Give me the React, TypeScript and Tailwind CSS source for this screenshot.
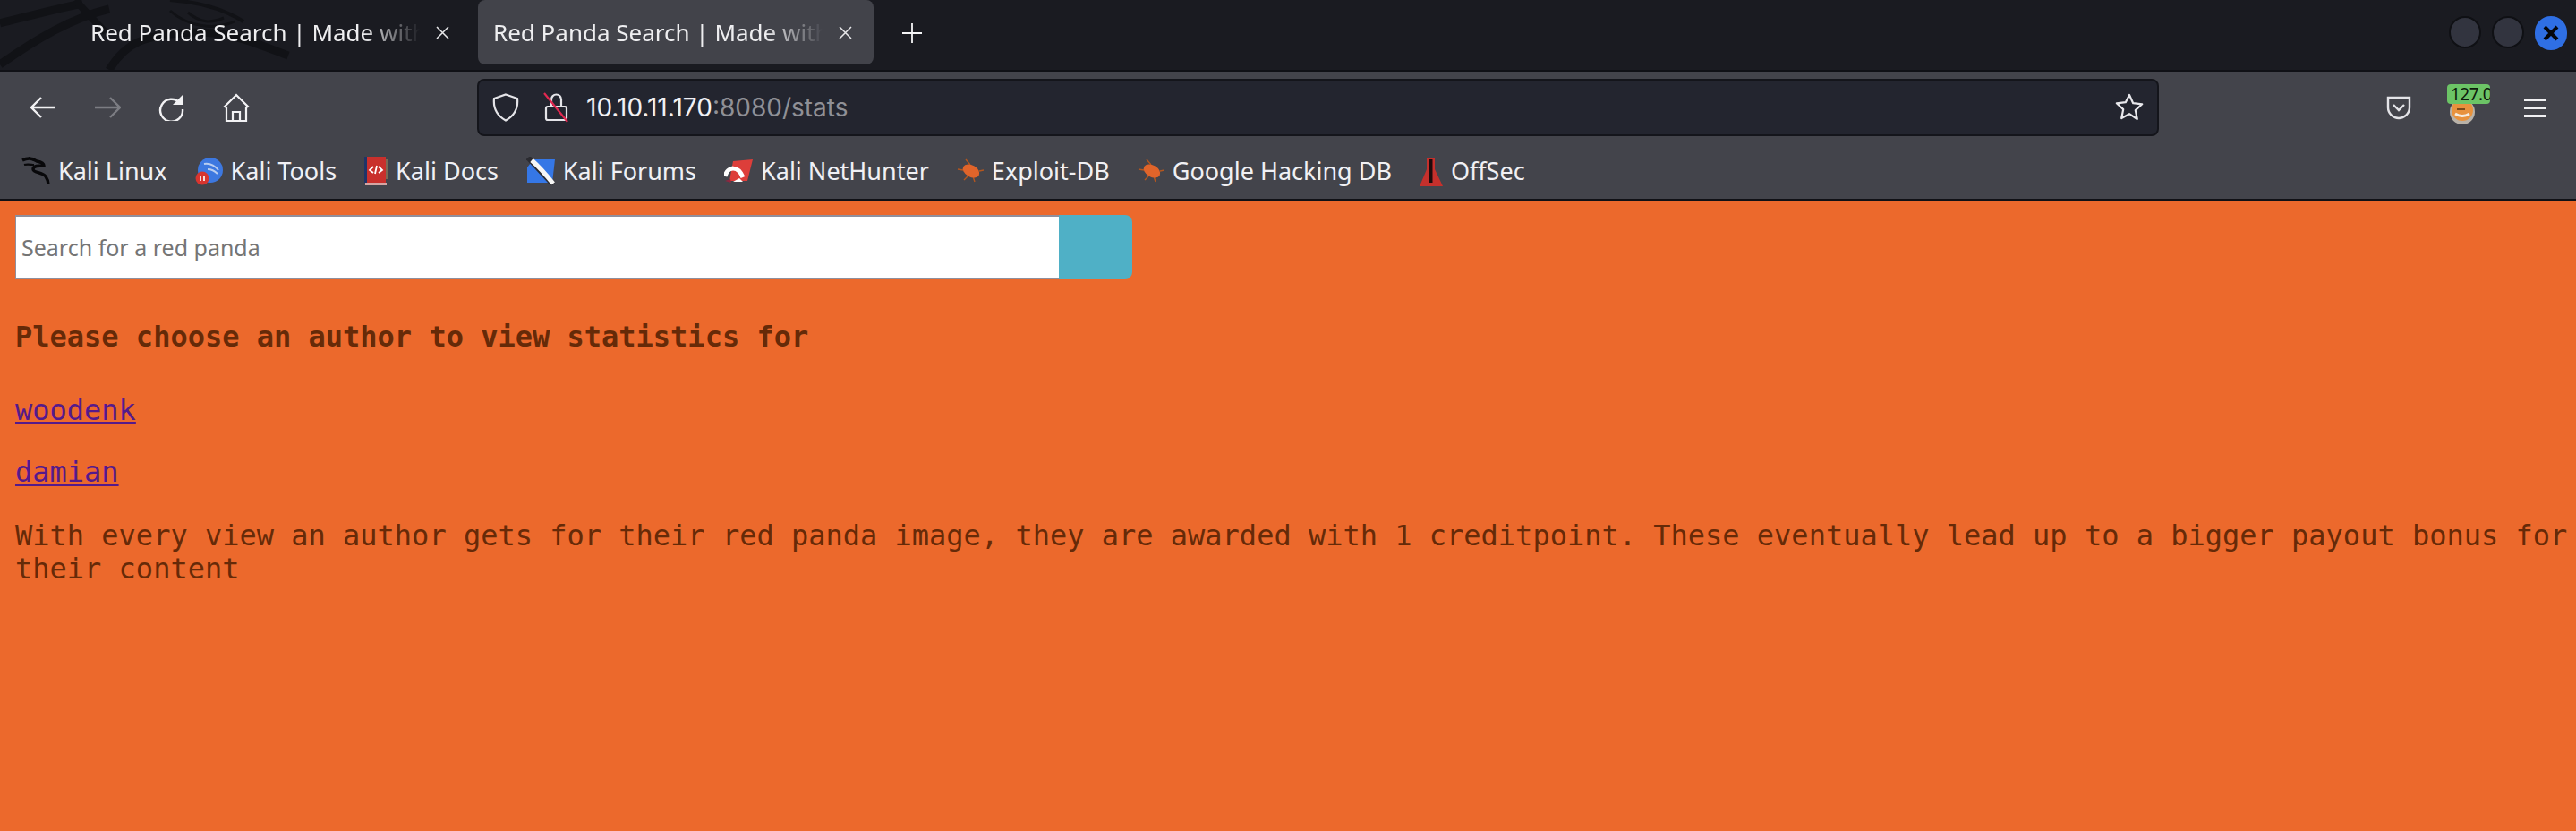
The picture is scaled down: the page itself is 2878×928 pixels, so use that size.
const uiFont = "[font-family:'Noto_Sans',sans-serif]";

function TabItem({ active }: { active?: boolean }) {
  return (
    <div className={`flex h-[72px] w-[442px] items-center pl-[17px] ${active ? 'rounded-lg bg-[#42434a]' : ''}`}>
      <span className="w-[380px] overflow-hidden whitespace-nowrap text-[26px] text-[#eeeef0] [mask-image:linear-gradient(to_right,black_80%,transparent_97%)]">
        Red Panda Search | Made with
      </span>
      <svg width="15" height="15" viewBox="0 0 15 15" className="ml-[6px]" fill="none" stroke="#e8e8ea" strokeWidth="1.5">
        <path d="M1 1l13 13M14 1L1 14" />
      </svg>
    </div>
  );
}

function Dragon() {
  return (
    <svg width="520" height="78" viewBox="0 0 520 78" fill="none" stroke="#111216" className="absolute left-0 top-0">
      <path d="M0 26C40 16 70 8 92 4" strokeWidth="9" />
      <path d="M0 72C40 44 80 20 122 10" strokeWidth="9" />
      <path d="M84 0C104 22 112 30 118 36" strokeWidth="8" />
      <path d="M122 78C140 48 160 38 220 36C260 36 290 50 322 62" strokeWidth="9" />
      <path d="M190 12C210 30 240 34 262 24M210 14C224 26 236 26 250 20" strokeWidth="3" />
      <path d="M190 0C220 2 250 10 272 24" strokeWidth="4" />
    </svg>
  );
}

function Back({ dim }: { dim?: boolean }) {
  return (
    <svg width="30" height="28" viewBox="0 0 30 28" fill="none" stroke={dim ? '#7c7d83' : '#f2f2f4'} strokeWidth="2.4">
      {dim ? <path d="M1 14h27M18 3l11 11-11 11" /> : <path d="M29 14H2M13 3L2 14l11 11" />}
    </svg>
  );
}

function Bookmark({ icon, label }: { icon: React.ReactNode; label: string }) {
  return (
    <div className="flex items-center gap-[9px]">
      {icon}
      <span className="whitespace-nowrap text-[27px] text-[#f0f0f4]">{label}</span>
    </div>
  );
}

function KaliIcon() {
  return (
    <svg width="32" height="34" viewBox="0 0 32 34" fill="none" stroke="#08080a" strokeWidth="3.4">
      <path d="M1 5c6-3 12-2 16 1 5 1 8 3 8 5-6 0-12 0-12 4 0 4 10 3 14 8 2 3 3 6 3 9" />
      <path d="M3 10c4-1 8 0 11 0M8 2c2 1 4 2 6 3" strokeWidth="2.2" />
    </svg>
  );
}

function ToolsIcon() {
  return (
    <svg width="31" height="32" viewBox="0 0 31 32">
      <circle cx="17" cy="15" r="14" fill="#3d78e0" />
      <path d="M10 8c6-1 12 2 16 7M14 14c4 0 8 2 11 5" fill="none" stroke="#b9cdf0" strokeWidth="2" />
      <circle cx="8" cy="24" r="7.5" fill="#d8352f" />
      <path d="M6 21v6M10 21v6" stroke="#f6dcdc" strokeWidth="2" />
    </svg>
  );
}

function DocsIcon() {
  return (
    <svg width="26" height="32" viewBox="0 0 26 32">
      <rect x="0" y="0" width="3" height="29" fill="#1f3468" />
      <rect x="3" y="0" width="21" height="29" fill="#c9302c" />
      <rect x="24" y="3" width="2" height="22" fill="#7a6a55" />
      <rect x="1" y="29" width="24" height="3" fill="#d4a6a4" />
      <path d="M10 11l-4 4 4 3M16 11l4 4-4 3M14 10l-2 9" fill="none" stroke="#fff" strokeWidth="1.8" />
    </svg>
  );
}

function ForumsIcon() {
  return (
    <svg width="32" height="32" viewBox="0 0 32 32">
      <path d="M8 3h24l-3 26H1V12z" fill="#3577e6" />
      <path d="M2 1l28 30" stroke="#2b2b30" strokeWidth="6" />
      <path d="M6 4c8 7 16 16 24 26" stroke="#f6f6f6" strokeWidth="5" />
    </svg>
  );
}

function NetHunterIcon() {
  return (
    <svg width="32" height="30" viewBox="0 0 32 30">
      <path d="M10 4L32 2l-6 24H6z" fill="#dd3e3a" />
      <path d="M1 21C4 9 16 9 21 22" fill="none" stroke="#fff" strokeWidth="5" />
      <path d="M10 27l7-4 4 4z" fill="#fff" />
      <path d="M1 26l6-2 1 4z" fill="#8f2740" />
    </svg>
  );
}

function BugIcon() {
  return (
    <svg width="30" height="28" viewBox="0 0 30 28" fill="none" stroke="#b3561f" strokeWidth="1.4">
      <path d="M10 1l5 6M1 12l6 1M8 24l4-4M20 26l-2-6M30 13l-5 1" />
      <ellipse cx="16" cy="14" rx="10" ry="6.5" transform="rotate(30 16 14)" fill="#e0642a" stroke="none" />
    </svg>
  );
}

function OffSecIcon() {
  return (
    <svg width="26" height="33" viewBox="0 0 26 33">
      <path d="M8 1h9v13l9 19H0l8-19z" fill="#c5302c" />
      <path d="M12.5 3v26" stroke="#1d0b0c" strokeWidth="4" />
    </svg>
  );
}

export default function App() {
  return (
    <div className="flex h-[928px] w-[2878px] flex-col overflow-hidden bg-[#ec692c]">
      <div className={`relative flex h-[80px] items-start border-b-2 border-[#101116] bg-[#1a1b21] ${uiFont}`}>
        <Dragon />
        <div className="relative flex w-full items-start pl-[84px]">
          <div className="mr-[8px]">
            <TabItem />
          </div>
          <TabItem active />
          <svg width="24" height="24" viewBox="0 0 24 24" className="ml-[31px] mt-[25px]" fill="none" stroke="#f4f4f6" strokeWidth="1.8">
            <path d="M12 1v22M1 12h22" />
          </svg>
          <div className="ml-auto mr-[10px] mt-[18px] flex gap-[12px]">
            <span className="h-[36px] w-[36px] rounded-full border-2 border-[#0f1014] bg-[#32343f]" />
            <span className="h-[36px] w-[36px] rounded-full border-2 border-[#0f1014] bg-[#32343f]" />
            <span className="flex h-[38px] w-[36px] items-center justify-center rounded-full bg-[#2f6fe4]">
              <svg width="18" height="18" viewBox="0 0 18 18" stroke="#05070c" strokeWidth="4">
                <path d="M2 2l14 14M16 2L2 16" />
              </svg>
            </span>
          </div>
        </div>
      </div>

      <div className={`flex h-[142px] flex-col bg-[#43444b] ${uiFont}`}>
        <div className="flex h-[80px] items-center pl-[12px]">
          <div className="flex w-[72px] justify-center"><Back /></div>
          <div className="flex w-[72px] justify-center"><Back dim /></div>
          <div className="flex w-[72px] justify-center">
            <svg width="30" height="30" viewBox="0 0 30 30" fill="none" stroke="#f2f2f4" strokeWidth="2.4" className="-ml-[2px]">
              <path d="M25 10A12.5 12.5 0 1 0 28 17" />
              <path d="M28 1v11H17z" fill="#f2f2f4" stroke="none" />
            </svg>
          </div>
          <div className="flex w-[72px] justify-center">
            <svg width="30" height="32" viewBox="0 0 30 32" fill="none" stroke="#f2f2f4" strokeWidth="2.2">
              <path d="M2 15L15 2l13 13-2 1v15H4V16z" />
              <path d="M11 31V21h8v10" />
            </svg>
          </div>

          <div className="ml-[233px] flex h-[64px] w-[1879px] items-center rounded-lg border-2 border-[#14151b] bg-[#23252f] pl-[15px] pr-[15px]">
            <svg width="30" height="32" viewBox="0 0 30 32" fill="none" stroke="#e4e4e8" strokeWidth="2.2">
              <path d="M15 1.5L28 6c1 10-3 19-13 24.5C5 25 1 16 2 6z" />
            </svg>
            <svg width="28" height="34" viewBox="0 0 28 34" fill="none" className="ml-[27px]">
              <path d="M9 16V8a5.5 5.5 0 0 1 11 0v8" stroke="#e4e4e8" strokeWidth="2.2" />
              <rect x="3" y="16" width="23" height="15" rx="2" stroke="#e4e4e8" strokeWidth="2.2" />
              <path d="M1 1l26 32" stroke="#e22850" strokeWidth="2.2" />
            </svg>
            <div className="ml-[20px] whitespace-nowrap text-[28px] text-[#f0f0f4] [font-family:Inter,sans-serif]">
              10.10.11.170<span className="text-[#8f9096]">:8080/stats</span>
            </div>
            <svg width="32" height="32" viewBox="0 0 32 32" fill="none" stroke="#e8e8ec" strokeWidth="2.2" className="ml-auto">
              <path d="M16 2l4.2 9.2 10 1.1-7.4 6.8 2 9.9L16 23.2 7.2 28l2-9.9-7.4-6.8 10-1.1z" strokeLinejoin="round" />
            </svg>
          </div>

          <div className="ml-[254px] flex items-center">
            <svg width="28" height="28" viewBox="0 0 28 28" fill="none" stroke="#e4e4e8" strokeWidth="2.4">
              <path d="M2 3h24v11c0 7-6 12-12 12S2 21 2 14z" />
              <path d="M8 11l6 6 6-6" />
            </svg>
            <div className="relative ml-[43px] h-[44px] w-[44px]">
              <svg width="30" height="30" viewBox="0 0 30 30" className="absolute left-[-1px] top-[12px]">
                <circle cx="15" cy="15" r="14" fill="#b9b2a8" />
                <circle cx="15" cy="13" r="12" fill="#e8923d" />
                <path d="M7 17c5 3 11 3 16 0" stroke="#f4ece0" strokeWidth="3" fill="none" />
                <path d="M9 12h9" stroke="#7b4a1b" strokeWidth="2" />
              </svg>
              <span className="absolute left-[-3px] top-[-4px] flex h-[22px] w-[48px] items-center overflow-hidden rounded-sm bg-[#6cc466] pl-[4px] text-[19px] leading-none tracking-[-0.5px] text-[#0d1a0c]">
                127.0
              </span>
            </div>
            <div className="ml-[39px] flex w-[24px] flex-col gap-[6px]">
              <span className="h-[3px] bg-[#f0f0f2]" />
              <span className="h-[3px] bg-[#f0f0f2]" />
              <span className="h-[3px] bg-[#f0f0f2]" />
            </div>
          </div>
        </div>
        <div className="flex h-[62px] items-center gap-[31px] pl-[24px]">
          <Bookmark icon={<KaliIcon />} label="Kali Linux" />
          <Bookmark icon={<ToolsIcon />} label="Kali Tools" />
          <Bookmark icon={<DocsIcon />} label="Kali Docs" />
          <Bookmark icon={<ForumsIcon />} label="Kali Forums" />
          <Bookmark icon={<NetHunterIcon />} label="Kali NetHunter" />
          <Bookmark icon={<BugIcon />} label="Exploit-DB" />
          <Bookmark icon={<BugIcon />} label="Google Hacking DB" />
          <Bookmark icon={<OffSecIcon />} label="OffSec" />
        </div>
      </div>

      <div className="h-[2px] bg-[#101116]" />

      <main className="pl-[17px] pt-[16px] text-[32px] leading-[37px] text-[#662a08] [font-family:'DejaVu_Sans_Mono',monospace]">
        <form className="flex h-[72px] w-[1248px]">
          <input
            placeholder="Search for a red panda"
            className="h-full w-[1166px] border-y-2 border-l border-[#8f8f9d] bg-white pl-[6px] text-[25px] outline-none placeholder:text-[#757575] [font-family:'Noto_Sans',sans-serif]"
          />
          <button type="button" className="h-full flex-1 rounded-r-lg bg-[#4fb0c6]" />
        </form>
        <h2 className="mt-[46px] font-bold">Please choose an author to view statistics for</h2>
        <p className="mt-[45px]">
          <a href="#" className="text-[#551a8b] underline">woodenk</a>
        </p>
        <p className="mt-[32px]">
          <a href="#" className="text-[#551a8b] underline">damian</a>
        </p>
        <p className="mt-[34px]">
          With every view an author gets for their red panda image, they are awarded with 1 creditpoint. These eventually lead up to a bigger payout bonus for their content
        </p>
      </main>
    </div>
  );
}
